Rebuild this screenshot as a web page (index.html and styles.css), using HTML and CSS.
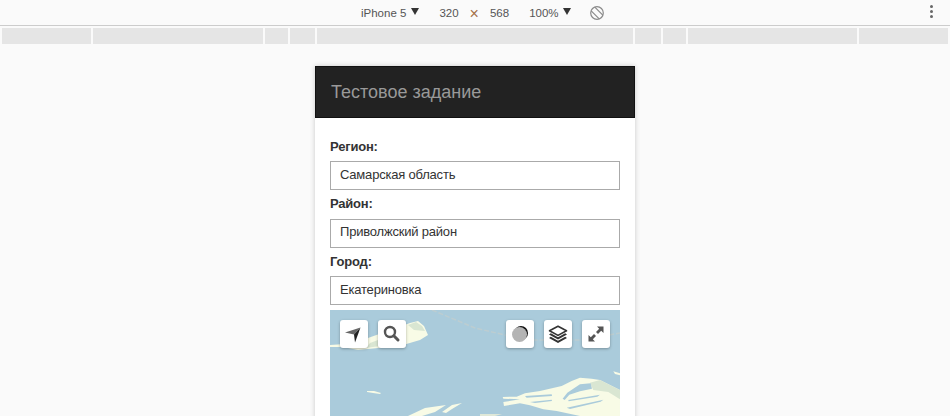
FILE: index.html
```html
<!DOCTYPE html>
<html lang="ru">
<head>
    <meta charset="UTF-8">
    <meta name="viewport" content="width=device-width, initial-scale=1.0">
    <title>Тестовое задание</title>
    <link rel="stylesheet" href="styles.css">
</head>
<body>
    <div class="toolbar">
        <div class="device-controls">
            <span class="device">iPhone 5</span>
            <span class="arrow arrow-device"></span>
            <span class="size-w">320</span>
            <span class="times">×</span>
            <span class="size-h">568</span>
            <span class="zoom">100%</span>
            <span class="arrow arrow-zoom"></span>
            <svg class="rotate" width="16" height="16" viewBox="0 0 16 16">
                <circle cx="8" cy="8" r="6.3" fill="none" stroke="#8a8a8a" stroke-width="1.2"/>
                <path d="M5.8 2.2 L13.8 10.2 M2.2 5.8 L10.2 13.8" fill="none" stroke="#8a8a8a" stroke-width="1.2"/>
            </svg>
        </div>
        <div class="dots"><i></i><i></i><i></i></div>
    </div>

    <div class="queries">
        <span class="seg w89"></span>
        <span class="seg w170"></span>
        <span class="seg w23"></span>
        <span class="seg w25"></span>
        <span class="seg w316"></span>
        <span class="seg w26"></span>
        <span class="seg w23"></span>
        <span class="seg w169"></span>
        <span class="seg w89"></span>
    </div>

    <div class="phone">
        <div class="header">Тестовое задание</div>
        <form class="content">
            <label class="field-label" for="region">Регион:</label>
            <input class="field" id="region" type="text" value="Самарская область">
            <label class="field-label" for="district">Район:</label>
            <input class="field" id="district" type="text" value="Приволжский район">
            <label class="field-label" for="city">Город:</label>
            <input class="field" id="city" type="text" value="Екатериновка">

            <div class="map">
                <svg class="map-bg" width="290" height="106" viewBox="0 0 290 106">
                    <path d="M102 0 L145 18 L175 25 M175 25 L205 30 L252 30 L290 23" fill="none" stroke="#bccdd1" stroke-width="1.5" stroke-dasharray="5 2"/>
                    <path d="M0 35 L15 34 L28 32 L38 28 L80 13 L88 11 L94 16 L98 25 L90 30 L73 35 L48 38 L28 40 L18 38 L14 37 L0 37 Z" fill="#f8fbe6"/>
                    <path d="M78 15 L86 12 L92 16 L95 21 L84 20 Z" fill="#d9e6d2"/>
                    <path d="M36 38 L40 33 L48 30 L50 36 Z" fill="#d9e6d2"/>
                    <path d="M37 81 L44 81 L51 83 L50 84 L43 83 L37 82 Z" fill="#f8fbe6"/>
                    <path d="M78 106 L95 98 L116 95 L105 102 L92 106 Z" fill="#f8fbe6"/>
                    <path d="M112 102 L122 95 L132 93 L122 99 L116 103 Z" fill="#f8fbe6"/>
                    <path d="M150 104 L172 104 L165 106 L150 106 Z" fill="#dfe8d8"/>
                    <g transform="translate(150 56) scale(0.3333)">
                        <path d="M400 16 L420 22 L420 28 L405 24 Z" fill="#f8fbe6"/>
                        <path d="M68 93 L110 92 L135 82 L180 75 L245 60 L275 45 L300 35 L335 38 L360 42 L420 72 L420 150 L300 150 L230 135 L190 130 L150 118 L120 112 L72 120 L70 108 L120 100 L70 98 Z" fill="#f8fbe6"/>
                        <path d="M360 42 L420 72 L420 100 L385 78 L340 72 L330 50 Z" fill="#d9e6d2"/>
                        <path d="M300 55 L332 52 L336 68 L300 76 L268 86 L254 102 L248 98 L262 80 Z" fill="#aacbdb"/>
                        <path d="M135 90 L215 85 L216 90 L140 95 Z" fill="#aacbdb"/>
                        <path d="M150 108 L215 101 L216 105 L165 111 Z" fill="#aacbdb"/>
                        <path d="M265 102 L360 86 L352 92 L266 106 Z" fill="#aacbdb"/>
                        <path d="M260 125 L370 101 L362 107 L270 129 Z" fill="#aacbdb"/>
                    </g>
                </svg>

                <div class="map-btn btn-locate">
                    <svg width="18" height="18" viewBox="0 0 18 18">
                        <path d="M15.5 2.5 L0 7.5 L9 9.5 Z" fill="#666"/>
                        <path d="M15.5 2.5 L9 9.5 L10 17.5 Z" fill="#222"/>
                    </svg>
                </div>
                <div class="map-btn btn-search">
                    <svg width="18" height="18" viewBox="0 0 18 18">
                        <circle cx="7" cy="7" r="5" fill="none" stroke="#555" stroke-width="2.4"/>
                        <path d="M10.8 10.8 L15 15" stroke="#555" stroke-width="3" stroke-linecap="round"/>
                    </svg>
                </div>
                <div class="map-btn btn-shade">
                    <svg width="18" height="18" viewBox="0 0 18 18">
                        <circle cx="10" cy="8" r="7" fill="#111"/>
                        <circle cx="8.5" cy="9.5" r="7.5" fill="#b4b4b4"/>
                    </svg>
                </div>
                <div class="map-btn btn-layers">
                    <svg width="20" height="18" viewBox="0 0 20 18">
                        <path d="M10 1.2 L18.5 5.8 L10 10.4 L1.5 5.8 Z" fill="#fff" stroke="#333" stroke-width="1.6" stroke-linejoin="round"/>
                        <path d="M2.8 8.2 L1 9.4 L10 14.4 L19 9.4 L17.2 8.2 L10 12.2 Z" fill="#333"/>
                        <path d="M2.8 11.8 L1 13 L10 18 L19 13 L17.2 11.8 L10 15.8 Z" fill="#333"/>
                    </svg>
                </div>
                <div class="map-btn btn-expand">
                    <svg width="18" height="18" viewBox="0 0 18 18">
                        <path d="M10 1.5 H16.5 V8 L14.2 5.7 L11 9 L9 7 L12.2 3.8 Z" fill="#555"/>
                        <path d="M8 16.5 H1.5 V10 L3.8 12.3 L7 9 L9 11 L5.8 14.2 Z" fill="#555"/>
                    </svg>
                </div>
            </div>
        </form>
    </div>
</body>
</html>
```

FILE: styles.css
```css
html, body {
    height: 100%;
    overflow: hidden;
}
body {
    margin: 0;
    background-color: #fafafa;
    font-family: "Liberation Sans", Arial, sans-serif;
    color: #333;
}
.toolbar {
    height: 25px;
    border-bottom: 1px solid #ccc;
    display: flex;
    align-items: center;
    padding-right: 17px;
    font-size: 11.5px;
    color: #555;
}
.device-controls {
    flex: 1;
    display: flex;
    align-items: center;
    padding-left: 361px;
}
.arrow {
    width: 0;
    height: 0;
    border-left: 4px solid transparent;
    border-right: 4px solid transparent;
    border-top: 7px solid #333;
    margin-top: -3px;
}
.arrow-device {
    margin-left: 5px;
}
.size-w {
    margin-left: 20px;
}
.times {
    margin: 2px 11px 0 11px;
    color: #a5724a;
    font-size: 16px;
}
.zoom {
    margin-left: 20px;
}
.arrow-zoom {
    margin-left: 4px;
}
.rotate {
    margin-left: 18px;
}
.dots i {
    display: block;
    width: 3px;
    height: 3px;
    margin-bottom: 2px;
    border-radius: 50%;
    background-color: #666;
}
.queries {
    display: flex;
    gap: 2px;
    margin-top: 2px;
    padding: 0 2px;
}
.seg {
    height: 16px;
    background-color: #e5e5e5;
}
.w89 { width: 89px; }
.w170 { width: 170px; }
.w23 { width: 23px; }
.w25 { width: 25px; }
.w316 { width: 316px; }
.w26 { width: 26px; }
.w169 { width: 169px; }

.phone {
    width: 320px;
    height: 568px;
    margin: 22px auto 0;
    background-color: #fff;
    box-shadow: 0 0 5px rgba(0, 0, 0, 0.2);
}
.header {
    height: 50px;
    line-height: 50px;
    padding-left: 15px;
    background-color: #222;
    border: 1px solid #111;
    font-size: 18px;
    color: #999;
}
.content {
    padding: 19.5px 15px 0;
}
.field-label {
    display: block;
    height: 20.5px;
    line-height: 17px;
    margin-bottom: 3px;
    font-size: 13px;
    font-weight: bold;
    letter-spacing: -0.2px;
}
.field {
    display: block;
    box-sizing: border-box;
    width: 290px;
    height: 29px;
    padding: 0 9px 3px;
    margin-bottom: 5px;
    border: 1px solid #aaa;
    border-radius: 0;
    outline: none;
    font-family: inherit;
    font-size: 13px;
    letter-spacing: -0.2px;
    color: #333;
}
.map {
    position: relative;
    height: 258px;
    background-color: #aacbdb;
}
.map-bg {
    display: block;
}
.map-btn {
    position: absolute;
    top: 10px;
    width: 28px;
    height: 28px;
    display: flex;
    align-items: center;
    justify-content: center;
    background-color: #fff;
    border-radius: 3px;
    box-shadow: 0 1px 3px rgba(0, 0, 0, 0.3);
}
.btn-locate { left: 10px; }
.btn-search { left: 48px; }
.btn-shade { left: 176px; }
.btn-layers { left: 214px; }
.btn-expand { left: 252px; }
```
